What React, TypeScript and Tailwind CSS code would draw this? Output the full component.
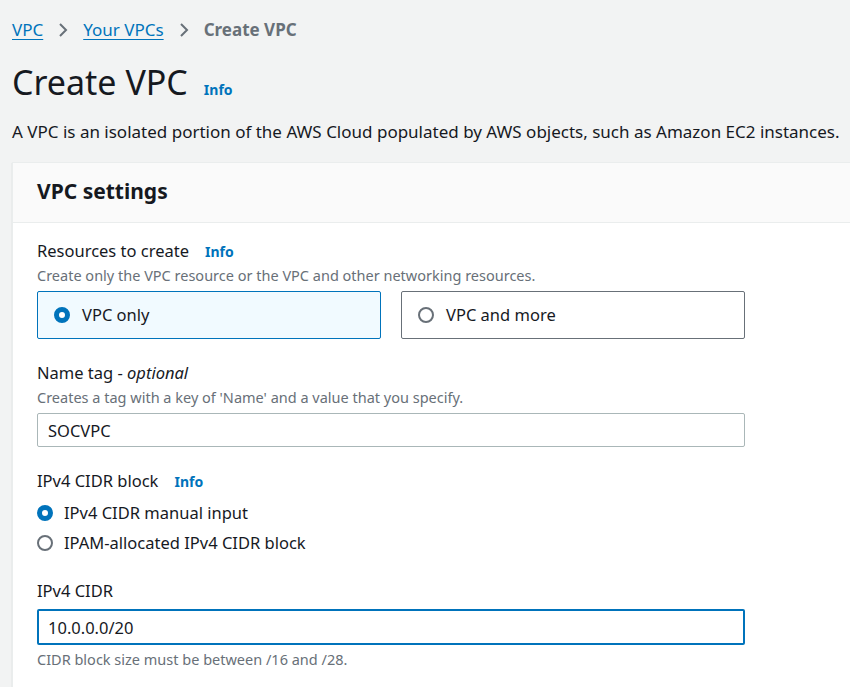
import React, { useState } from 'react';

const font = { fontFamily: '"Noto Sans", "Open Sans", Arial, sans-serif' };

const Info: React.FC<{ className?: string }> = ({ className = '' }) => (
    <span className={`text-[14px] font-bold text-[#0073bb] ${className}`}>Info</span>
);

const Chevron = () => (
    <svg width="12" height="16" viewBox="0 0 12 16" className="mx-[14px]">
        <path d="M3 2 L9 8 L3 14" fill="none" stroke="#687078" strokeWidth="2" />
    </svg>
);

const Radio: React.FC<{ checked: boolean }> = ({ checked }) =>
    checked ? (
        <span className="inline-block w-4 h-4 rounded-full border-[5px] border-[#0073bb] bg-white shrink-0" />
    ) : (
        <span className="inline-block w-4 h-4 rounded-full border-2 border-[#687078] bg-white shrink-0" />
    );

const App: React.FC = () => {
    const [resource, setResource] = useState('vpc');
    const [cidrMode, setCidrMode] = useState('manual');

    return (
        <div className="min-h-[687px] bg-[#f2f3f3] text-[#16191f] overflow-hidden" style={font}>
            <div className="pl-[12px]">
                <nav className="flex items-center h-[60px] text-[17px]">
                    <span className="text-[#0073bb] underline underline-offset-[3px]">VPC</span>
                    <Chevron />
                    <span className="text-[#0073bb] underline underline-offset-[3px]">Your VPCs</span>
                    <Chevron />
                    <span className="font-bold text-[#687078]">Create VPC</span>
                </nav>
                <div className="flex items-baseline">
                    <h1 className="text-[34px] leading-[44px]">Create VPC</h1>
                    <Info className="ml-[16px]" />
                </div>
                <p className="text-[17px] leading-[24px] mt-[16px] whitespace-nowrap">
                    A VPC is an isolated portion of the AWS Cloud populated by AWS objects, such as Amazon EC2 instances.
                </p>

                <div className="mt-[18px] w-[900px] border-l border-t border-[#eaeded] bg-white shadow-[0_1px_1px_rgba(0,28,36,0.2)]">
                    <div className="bg-[#fafafa] border-b border-[#eaeded] h-[60px] flex items-center pl-[24px] pb-[2px]">
                        <h2 className="text-[21px] font-bold">VPC settings</h2>
                    </div>
                    <div className="pl-[24px] pt-[15px] pb-[40px] w-[732px] flex flex-col">
                        <div className="flex items-baseline">
                            <span className="text-[16.5px] leading-[26px]">Resources to create</span>
                            <Info className="ml-[16px]" />
                        </div>
                        <p className="text-[14.5px] leading-[20px] text-[#687078] mt-[1px]">
                            Create only the VPC resource or the VPC and other networking resources.
                        </p>
                        <div className="grid grid-cols-2 gap-[20px] mt-[6px]">
                            <button
                                onClick={() => setResource('vpc')}
                                className={`h-[48px] flex items-center gap-[12px] pl-[16px] rounded-[2px] border text-[16.5px] text-left ${
                                    resource === 'vpc' ? 'bg-[#f1faff] border-[#0073bb]' : 'bg-white border-[#aab7b8]'
                                }`}
                            >
                                <Radio checked={resource === 'vpc'} />
                                VPC only
                            </button>
                            <button
                                onClick={() => setResource('more')}
                                className={`h-[48px] flex items-center gap-[12px] pl-[16px] rounded-[2px] border text-[16.5px] text-left ${
                                    resource === 'more' ? 'bg-[#f1faff] border-[#0073bb]' : 'bg-white border-[#687078]'
                                }`}
                            >
                                <Radio checked={resource === 'more'} />
                                VPC and more
                            </button>
                        </div>

                        <div className="mt-[21px] text-[16.5px] leading-[26px]">
                            Name tag - <i>optional</i>
                        </div>
                        <p className="text-[14.5px] leading-[20px] text-[#687078] mt-[1px]">
                            Creates a tag with a key of 'Name' and a value that you specify.
                        </p>
                        <input
                            defaultValue="SOCVPC"
                            className="mt-[6px] h-[34px] w-full rounded-[2px] border border-[#aab7b8] bg-white px-[10px] text-[16.5px] outline-none"
                        />

                        <div className="flex items-baseline mt-[21px]">
                            <span className="text-[16.5px] leading-[26px]">IPv4 CIDR block</span>
                            <Info className="ml-[16px]" />
                        </div>
                        <div className="flex flex-col mt-[4px] text-[16.5px]">
                            <label className="flex items-center gap-[11px] h-[30px]" onClick={() => setCidrMode('manual')}>
                                <Radio checked={cidrMode === 'manual'} />
                                IPv4 CIDR manual input
                            </label>
                            <label className="flex items-center gap-[11px] h-[30px]" onClick={() => setCidrMode('ipam')}>
                                <Radio checked={cidrMode === 'ipam'} />
                                IPAM-allocated IPv4 CIDR block
                            </label>
                        </div>

                        <div className="mt-[20px] text-[16.5px] leading-[26px]">IPv4 CIDR</div>
                        <input
                            defaultValue="10.0.0.0/20"
                            className="mt-[5px] h-[36px] w-full rounded-[2px] border-2 border-[#0073bb] bg-white px-[9px] text-[16.5px] outline-none"
                        />
                        <p className="mt-[4px] text-[14.5px] leading-[20px] text-[#687078]">
                            CIDR block size must be between /16 and /28.
                        </p>
                    </div>
                </div>
            </div>
        </div>
    );
};

export default App;
